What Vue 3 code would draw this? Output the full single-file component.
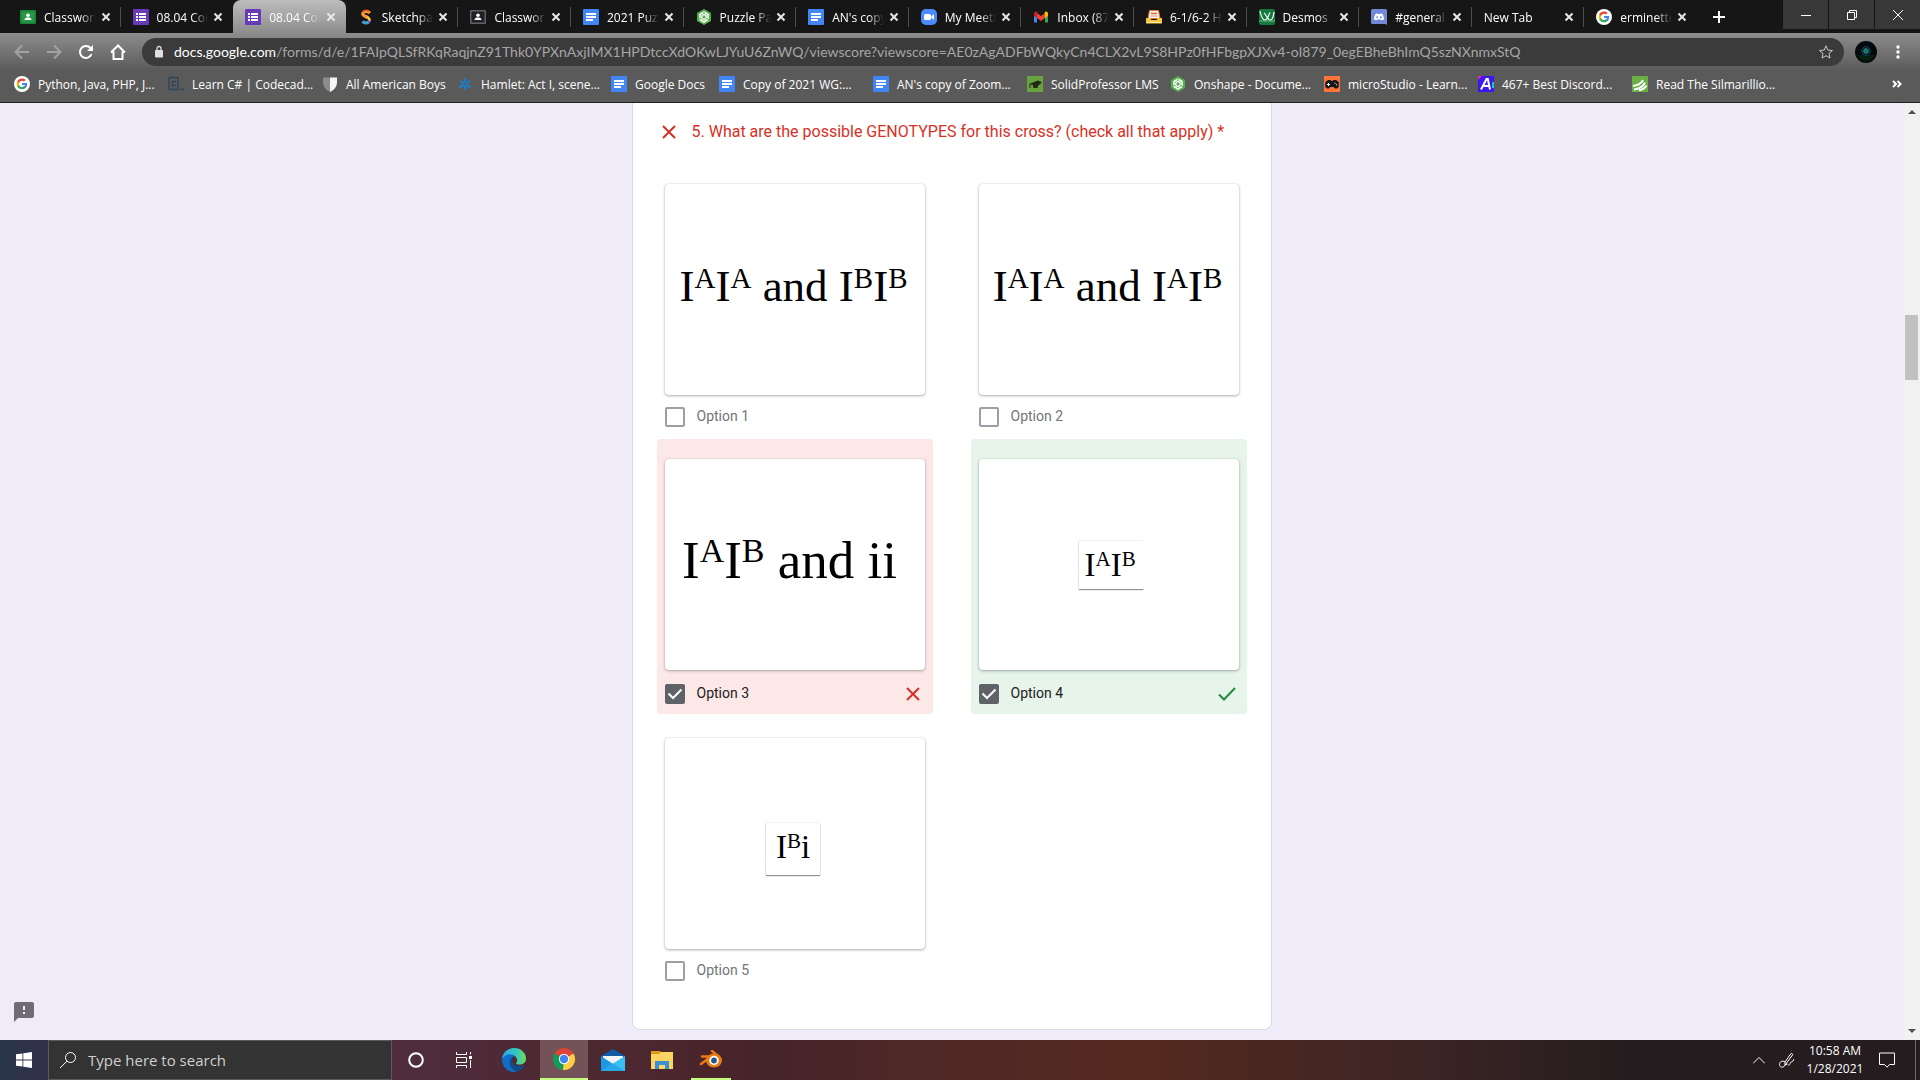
<script setup>
const G = '<path fill="#4285f4" d="M13.1 8.1c0-.4 0-.7-.1-1.100H8v2h2.900c-.1.7-.5 1.200-1.100 1.600v1.400h1.800c1-.9 1.500-2.300 1.500-3.900z"/><path fill="#34a853" d="M8 13.300c1.400 0 2.600-.5 3.500-1.300l-1.700-1.400c-.5.3-1.100.5-1.800.5-1.400 0-2.500-.9-2.900-2.200H3.200v1.400C4.100 12.100 5.900 13.300 8 13.300z"/><path fill="#fbbc04" d="M5.100 8.900a3.200 3.200 0 0 1 0-2V5.500H3.200a5.400 5.400 0 0 0 0 4.800z"/><path fill="#ea4335" d="M8 4.700c.8 0 1.500.3 2 .8L11.600 4C10.600 3.100 9.400 2.600 8 2.600 5.900 2.600 4.100 3.700 3.200 5.500l1.900 1.400C5.500 5.600 6.600 4.700 8 4.700z"/>'

const icons = {
  classroom: '<rect y="1" width="16" height="14" rx="1" fill="#188038"/><rect x="1.500" y="2.500" width="13" height="11" fill="#34a853" opacity=".55"/><circle cx="8" cy="6.300" r="1.800" fill="#fff"/><path fill="#fff" d="M4.500 11c0-1.800 1.800-2.400 3.500-2.400s3.500.6 3.500 2.400z"/>',
  classroomGray: '<rect y="1" width="16" height="14" rx="1" fill="#5f6368"/><rect x="1.500" y="2.500" width="13" height="11" fill="#202124"/><circle cx="8" cy="6.300" r="1.800" fill="#fff"/><path fill="#fff" d="M4.500 11c0-1.800 1.800-2.400 3.500-2.400s3.500.6 3.500 2.400z"/>',
  forms: '<rect width="16" height="16" rx="1" fill="#673ab7"/><path fill="#fff" d="M3 4h2v2H3zm3 0h7v2H6zM3 7h2v2H3zm3 0h7v2H6zm-3 3h2v2H3zm3 0h7v2H6z"/>',
  sketch: '<path fill="none" stroke="#8a3fc0" stroke-width="3" d="M11.500 3.800C9.500 1.500 5 2.200 5 5c0 3 6.500 2.500 6.500 6 0 3.200-4.500 3.700-7 1.500"/><path fill="none" stroke="#fb9b22" stroke-width="3" d="M12 4C9.500 1.500 4.800 2 4.800 5c0 2.200 3.500 2.500 5.200 3.500"/><path fill="none" stroke="#f0d22c" stroke-width="2" d="M9 8c2 1 3 2 2.500 4"/><path fill="none" stroke="#2fa5c8" stroke-width="3" d="M10.500 13c-2 1.500-4.500 1-6-.5"/><path fill="none" stroke="#e5482d" stroke-width="1.500" d="M4.500 3C6 .8 9 .8 11 2"/>',
  docs: '<rect width="16" height="16" rx="1" fill="#4285f4"/><path fill="#fff" d="M3 4h10v2H3zm0 3h10v2H3zm0 3h7v2H3z"/>',
  onshape: '<path fill="#55b04b" d="M8 0l7 4v8l-7 4-7-4V4z"/><path fill="none" stroke="#fff" stroke-width="1.500" d="M8 3l4 2.500v5L8 13l-4-2.500v-5z"/><circle cx="8" cy="8" r="2.300" fill="#55b04b" stroke="#fff" stroke-width="1.300"/><path stroke="#55b04b" stroke-width="1" d="M8 1v3M13 11l-3-2M2 11l3-2"/>',
  zoom: '<rect width="16" height="16" rx="5" fill="#4a8cff"/><rect x="3" y="5" width="7" height="6" rx="1.500" fill="#fff"/><path fill="#fff" d="M10.500 7L13 5.300v5.400L10.500 9z"/>',
  gmail: '<path fill="#4285f4" d="M1 13.500V4l3 2.200v7.300z"/><path fill="#34a853" d="M12 13.500V6.200L15 4v9.500z"/><path fill="#ea4335" d="M4 9V4l4 3 4-3v5l-4 3z"/><path fill="#c5221f" d="M1 4.500C1 2.600 3 2 4.200 3L4 9 1 6.700z"/><path fill="#fbbc04" d="M15 4.500C15 2.600 13 2 11.800 3L12 9l3-2.300z"/>',
  inbox: '<path fill="#f5f0e6" stroke="#e07a3a" d="M3.500 1.500h9l1.500 8H2z"/><path stroke="#e8603c" stroke-width="1.500" d="M5 4.500h6"/><path stroke="#e8a08c" d="M4.500 7h7"/><path fill="#f8c63c" d="M0 9h4l1.500 2h5L12 9h4v5.500H0z"/><path fill="#fff0b0" d="M1 13h14v1H1z"/>',
  desmos: '<rect width="16" height="16" rx="2" fill="#127a3d"/><path fill="none" stroke="#fff" stroke-width="1.200" d="M1 2c1 5 3 9 5 9 2.500 0 3.500-5 5-7.500M5 4c2 1 3.500 7 6.500 7 2 0 3-4 3.500-8"/><path fill="none" stroke="#8fc5a4" stroke-width=".8" d="M0 12h16"/>',
  discord: '<rect width="16" height="15" rx="1.500" fill="#7289da"/><path fill="#7289da" d="M11 13h5v3z"/><path fill="#fff" d="M5 4.500h1.300l.4.500h2.600l.4-.5H11c1.300 1.500 2 4 2 5.800-.8.8-1.700 1-2.500 1l-.6-.9H6.100l-.6.900c-.8 0-1.700-.2-2.500-1 0-1.800.7-4.300 2-5.800z"/><circle cx="6.200" cy="8.200" r="1" fill="#7289da"/><circle cx="9.800" cy="8.200" r="1" fill="#7289da"/>',
  google: `<circle cx="8" cy="8" r="8" fill="#fff"/>${G}`,
  codecademy: '<rect x="1" y="1.500" width="9" height="12" rx="1" fill="none" stroke="#2c4453" stroke-width="1.300"/><path fill="none" stroke="#2c4453" stroke-width="1.300" d="M8 5.500H4.500v4H8M12 13.500h4"/>',
  shield: '<path fill="#8c8c8c" d="M1 1.500h7V16C3 13.500 1 10 1 6z"/><path fill="#f5f5f5" d="M15 1.500H8V16c5-2.500 7-6 7-10z"/>',
  spark: '<path fill="none" stroke="#1283da" stroke-width="1.700" stroke-linecap="round" d="M8 2.500v3.700M8 9.800v3.700M3.200 5.300l3.200 1.800M9.600 9l3.200 1.800M12.800 5.300L9.600 7.100M6.400 9l-3.200 1.800"/><circle cx="3.500" cy="11" r="1.200" fill="#1283da"/><circle cx="12.500" cy="11" r="1.200" fill="#1283da"/>',
  solid: '<rect width="16" height="16" fill="#67a23f"/><path fill="#1d2b17" d="M2 8l9-3.500 4 1.700L11 10v1.500c-2 1-4 .5-5 0V9z"/><path stroke="#1d2b17" d="M3 8v4"/>',
  micro: '<rect width="16" height="16" fill="#ff7438"/><path fill="#15191d" d="M4 4h2.500l1 1h1l1-1H12l2.700 2v5L13 12.500h-2L9.500 11h-3L5 12.500H3L1.300 11V6z"/><path stroke="#fff" d="M4.500 7v3M3 8.500h3"/><path fill="#fff" d="M10.500 6.800h1v1h-1zm1.500 1.500h1v1h-1z"/>',
  discordBest: '<rect width="16" height="16" fill="#3b17f0"/><path fill="#e72b9c" d="M0 0h4L0 4z"/><path fill="#20c5d9" d="M14 6h2v6h-2z"/><path fill="none" stroke="#fff" stroke-width="2" d="M3 13.500L8.500 3h1.300L12 13.500M5.500 10h6"/>',
  read: '<rect width="16" height="16" fill="#69b043"/><path fill="none" stroke="#fff" stroke-width="2" d="M1 10c5-.5 8-2 10-6M2 13.500c6-.5 9-3 11-7M7 14.500c4-1 6-2.500 7.500-5"/>',
}

const tabs = [
  { icon: 'classroom', title: 'Classwork' },
  { icon: 'forms', title: '08.04 Con' },
  { icon: 'forms', title: '08.04 Con', active: true },
  { icon: 'sketch', title: 'Sketchpad' },
  { icon: 'classroomGray', title: 'Classwork' },
  { icon: 'docs', title: '2021 Puzz' },
  { icon: 'onshape', title: 'Puzzle Par' },
  { icon: 'docs', title: "AN's copy" },
  { icon: 'zoom', title: 'My Meeti' },
  { icon: 'gmail', title: 'Inbox (87' },
  { icon: 'inbox', title: '6-1/6-2 H' },
  { icon: 'desmos', title: 'Desmos |' },
  { icon: 'discord', title: '#general' },
  { title: 'New Tab' },
  { icon: 'google', title: 'erminette' },
]

const bookmarks = [
  { icon: 'google', title: 'Python, Java, PHP, J...' },
  { icon: 'codecademy', title: 'Learn C# | Codecad...' },
  { icon: 'shield', title: 'All American Boys', size: 'medium' },
  { icon: 'spark', title: 'Hamlet: Act I, scene...' },
  { icon: 'docs', title: 'Google Docs', size: 'small' },
  { icon: 'docs', title: 'Copy of 2021 WG:...' },
  { icon: 'docs', title: "AN's copy of Zoom..." },
  { icon: 'solid', title: 'SolidProfessor LMS', size: 'large' },
  { icon: 'onshape', title: 'Onshape - Docume...' },
  { icon: 'micro', title: 'microStudio - Learn...' },
  { icon: 'discordBest', title: '467+ Best Discord...' },
  { icon: 'read', title: 'Read The Silmarillio...' },
]

const sup = (t) => ({ t, up: true })
const txt = (t) => ({ t })
const options = [
  { id: 1, size: 'wide', parts: [txt('I'), sup('A'), txt('I'), sup('A'), txt(' and I'), sup('B'), txt('I'), sup('B')] },
  { id: 2, size: 'wide', parts: [txt('I'), sup('A'), txt('I'), sup('A'), txt(' and I'), sup('A'), txt('I'), sup('B')] },
  { id: 3, size: 'big', state: 'wrong', parts: [txt('I'), sup('A'), txt('I'), sup('B'), txt(' and ii')] },
  { id: 4, size: 'clip', state: 'right', parts: [txt('I'), sup('A'), txt('I'), sup('B')] },
  { id: 5, size: 'tile', parts: [txt('I'), sup('B'), txt('i')] },
]
const path = '/forms/d/e/1FAIpQLSfRKqRaqjnZ91Thk0YPXnAxjIMX1HPDtccXdOKwLJYuU6ZnWQ/viewscore?viewscore=AE0zAgADFbWQkyCn4CLX2vL9S8HPz0fHFbgpXJXv4-oI879_0egEBheBhImQ5szNXnmxStQ'
</script>

<template>
  <div class="screen">
    <header class="browser">
      <div class="strip">
        <div class="tabs">
          <div v-for="(tab, i) in tabs" :key="i" class="tab" :class="{ active: tab.active, bare: i === 1 }">
            <svg v-if="tab.icon" class="fav" viewBox="0 0 16 16" v-html="icons[tab.icon]"></svg>
            <span class="title">{{ tab.title }}</span>
            <button class="close" aria-label="Close tab">
              <svg viewBox="0 0 10 10"><path d="M1.500 1.500l7 7M8.500 1.500l-7 7" /></svg>
            </button>
          </div>
        </div>
        <button class="plus" aria-label="New tab"><svg viewBox="0 0 12 12"><path d="M6 0v12M0 6h12" /></svg></button>
        <div class="controls">
          <button aria-label="Minimize"><svg viewBox="0 0 10 10"><path d="M0 5.500h10" /></svg></button>
          <button aria-label="Restore"><svg viewBox="0 0 10 10"><path d="M.5 2.500h7v7h-7zM2.500 2.500v-2h7v7h-2" /></svg></button>
          <button aria-label="Close"><svg viewBox="0 0 10 10"><path d="M0 0l10 10M10 0L0 10" /></svg></button>
        </div>
      </div>

      <div class="toolbar">
        <button class="tool dim" aria-label="Back"><svg viewBox="0 0 16 16"><path d="M15 8H2M8 1.500L1.500 8 8 14.500" /></svg></button>
        <button class="tool dim" aria-label="Forward"><svg viewBox="0 0 16 16"><path d="M1 8h13M8 1.500L14.500 8 8 14.500" /></svg></button>
        <button class="tool" aria-label="Reload"><svg viewBox="0 0 16 16"><path d="M13.500 10.200A6 6 0 1 1 12.500 4" /><path class="solid" d="M15 1v6H9z" /></svg></button>
        <button class="tool" aria-label="Home"><svg viewBox="0 0 16 16"><path d="M1 8.500L8 1.500l7 7M3.500 7.500V15h9V7.500" /></svg></button>
        <div class="address">
          <svg class="lock" viewBox="0 0 10 14"><rect x="1" y="5" width="8" height="7.500" rx="1" fill="#e0e0e0" /><path d="M3 5.500V3.500a2 2 0 0 1 4 0v2" fill="none" stroke="#e0e0e0" stroke-width="1.300" /></svg>
          <label for="url">docs.google.com</label>
          <input id="url" type="text" :value="path" />
          <button class="star" aria-label="Bookmark this tab"><svg viewBox="0 0 16 16"><path d="M8 1.800l1.800 4.300 4.700.4-3.500 3 1 4.600-4-2.400-4 2.400 1-4.600-3.500-3 4.700-.4z" /></svg></button>
        </div>
        <button class="profile" aria-label="Profile"><svg viewBox="0 0 22 22"><circle cx="11" cy="11" r="11" fill="#06090c" /><path d="M2 14a10 10 0 0 0 18 0z" fill="#062010" /><circle cx="11" cy="10" r="4.300" fill="none" stroke="#0d4d7c" /><circle cx="11" cy="10" r="2.300" fill="#126d55" stroke="#1aa68a" /></svg></button>
        <button class="more" aria-label="Menu"><svg viewBox="0 0 4 14"><circle cx="2" cy="2" r="1.700" /><circle cx="2" cy="7" r="1.700" /><circle cx="2" cy="12" r="1.700" /></svg></button>
      </div>

      <nav class="bookmarks">
        <a v-for="b in bookmarks" :key="b.title" href="#" class="bookmark" :class="b.size">
          <svg class="fav" viewBox="0 0 16 16" v-html="icons[b.icon]"></svg>
          <span>{{ b.title }}</span>
        </a>
        <button class="overflow" aria-label="More bookmarks"><svg viewBox="0 0 10 8"><path d="M1 1l3 3-3 3M5.500 1l3 3-3 3" /></svg></button>
      </nav>
    </header>

    <div class="viewport">
      <main class="page">
        <section class="card">
          <h1 class="question">
            <svg class="mark wrong" viewBox="0 0 14 14"><path d="M1 1l12 12M13 1L1 13" /></svg>
            <span>5. What are the possible GENOTYPES for this cross? (check all that apply) *</span>
          </h1>
          <div class="options">
            <div v-for="o in options" :key="o.id" class="option" :class="o.state">
              <div class="picture">
                <div class="formula" :class="o.size"><span v-for="(p, i) in o.parts" :key="i" :class="{ up: p.up }">{{ p.t }}</span></div>
              </div>
              <div class="choice">
                <input :id="'opt' + o.id" type="checkbox" :checked="!!o.state" />
                <label :for="'opt' + o.id">Option {{ o.id }}</label>
                <svg v-if="o.state === 'wrong'" class="mark wrong" viewBox="0 0 14 14"><path d="M1 1l12 12M13 1L1 13" /></svg>
                <svg v-if="o.state === 'right'" class="mark right" viewBox="0 0 18 14"><path d="M1 7.500L6 12.500 17 1" /></svg>
              </div>
            </div>
          </div>
        </section>
        <button class="feedback" aria-label="Report a problem"><svg viewBox="0 0 20 20"><path d="M18 0H2a2 2 0 0 0-2 2v18l4-4h14a2 2 0 0 0 2-2V2a2 2 0 0 0-2-2zm-7 12H9v-2h2zm0-4H9V4h2z" /></svg></button>
      </main>
      <div class="scrollbar">
        <svg viewBox="0 0 8 4"><path d="M0 4l4-4 4 4z" /></svg>
        <div class="track"><div class="thumb"></div></div>
        <svg viewBox="0 0 8 4"><path d="M0 0l4 4 4-4z" /></svg>
      </div>
    </div>

    <footer class="taskbar">
      <button class="start" aria-label="Start"><svg viewBox="0 0 16 16"><path fill="#fff" d="M0 2.300l6.500-.9v6.200H0zM7.300 1.300L16 0v7.600H7.300zM0 8.400h6.500v6.200L0 13.700zM7.300 8.400H16V16l-8.700-1.200z" /></svg></button>
      <label class="search">
        <svg viewBox="0 0 16 16"><circle cx="10.500" cy="5.500" r="5" /><path d="M7 9.200L0 16" /></svg>
        <input type="text" placeholder="Type here to search" />
      </label>
      <button class="app" aria-label="Cortana"><svg class="s16" viewBox="0 0 16 16"><circle cx="8" cy="8" r="6.800" fill="none" stroke="#fff" stroke-width="2" /></svg></button>
      <button class="app" aria-label="Task View"><svg class="s16" viewBox="0 0 16 16"><path fill="none" stroke="#fff" d="M.5 0v2.500h10V0M.5 16v-2.500h10V16M.5 5.500h10v5H.5zM14.500 0v2.500M14.500 8v8" /><path fill="#fff" d="M13 4h3v3h-3z" /></svg></button>
      <button class="app wide-app" aria-label="Edge">
        <svg class="s24" viewBox="0 0 24 24">
          <defs>
            <linearGradient id="e1" x1="0" y1="0" x2="1" y2="0"><stop offset="0" stop-color="#2aa8e8" /><stop offset=".6" stop-color="#33c7c0" /><stop offset="1" stop-color="#6fe052" /></linearGradient>
          </defs>
          <path fill="#0f6fc8" d="M0 11C2 5 9 4 12.500 8c-3 1-4 5-1.500 8 3 3 8 3 11 1-2 5-7 7-11 7C5 23.500 0 18 0 11z" />
          <path fill="#114a8b" d="M9 10c-3 4-1 11 5 13.500 4-.5 7-3 8-6.500-3 2-8 2-11-1-2-2.500-2-4.500-.5-6z" />
          <path fill="url(#e1)" d="M0 11C.5 4.500 6 0 12 0c7 0 12 5 12 10.500 0 4-3 6-6.500 6-3 0-4-1-3-2.200C17 11 12 4.500 6 6.500 3 7.500 1 9 0 11z" />
        </svg>
      </button>
      <button class="app current" aria-label="Chrome">
        <svg class="s24" viewBox="0 0 24 24"><path fill="#db4437" d="M12 12L2.500 6.500a11 11 0 0 1 19 0z" /><path fill="#0f9d58" d="M12 12l-1 11A11 11 0 0 1 2.500 6.500z" /><path fill="#ffcd40" d="M12 12l9.500-5.500A11 11 0 0 1 11 23z" /><circle cx="12" cy="12" r="5.200" fill="#fff" /><circle cx="12" cy="12" r="4.200" fill="#4285f4" /></svg>
      </button>
      <button class="app" aria-label="Mail"><svg class="s24" viewBox="0 0 24 24"><path fill="#0f5ba7" d="M0 8l12-7 12 7v4H0z" /><path fill="#f3f3f3" d="M2 8h20v9H2z" /><path fill="#1b97e4" d="M0 8l12 8-8 7H0z" /><path fill="#37c0f2" d="M24 8L0 23h24z" /><path fill="#2aa7e8" d="M12 15.500L24 23H0z" /></svg></button>
      <button class="app" aria-label="File Explorer"><svg class="s24" viewBox="0 0 24 24"><path fill="#dc9a1c" d="M1 3h9l2 2h11v4H1z" /><path fill="#fcd462" d="M1 6h8l2-2h12v17H1z" /><path fill="#3a8fd6" d="M5 13h14v8h-4v-4H9v4H5z" /></svg></button>
      <button class="app running" aria-label="Blender"><svg class="s24" viewBox="0 0 24 24"><path fill="none" stroke="#ea7a14" stroke-width="2.500" stroke-linecap="round" d="M3 9.500h10M13 4l6 5M2 17l8-6" /><ellipse cx="15" cy="13.500" rx="8" ry="7" fill="#ea7a14" /><circle cx="15" cy="13.500" r="4.700" fill="#fff" /><circle cx="15" cy="13.500" r="2.900" fill="#265787" /></svg></button>
      <div class="tray">
        <button aria-label="Show hidden icons"><svg class="chev" viewBox="0 0 12 7"><path d="M0 6.500l6-6 6 6" /></svg></button>
        <button aria-label="Windows Ink"><svg class="s16" viewBox="0 0 16 16"><path d="M6 10C3 8 .5 10 .5 12.500S3 16 5 14.500L13.500 3c.5-1-.8-2-1.700-1.200L6 10v3l2.500-1M9 13c2 1 2-3 4-3.500s2-2.500 1-2.500" /></svg></button>
        <div class="clock"><span>10:58 AM</span><span>1/28/2021</span></div>
        <button aria-label="Notifications"><svg class="s16" viewBox="0 0 16 16"><path d="M.5 1h15v11.500h-5L8 15.200l-2.500-2.700h-5z" /></svg></button>
      </div>
    </footer>
  </div>
</template>

<style>
body { margin: 0; }
</style>

<style scoped>
* { box-sizing: border-box; }
button { border: 0; padding: 0; background: none; display: flex; align-items: center; justify-content: center; flex: none; }
svg { display: block; flex: none; }
input { font: inherit; border: 0; outline: 0; background: none; padding: 0; }
.screen { display: flex; flex-direction: column; height: 100vh; overflow: hidden; font-family: "Open Sans", sans-serif; }

.browser { background: #5a5a5a; border-bottom: 1px solid #202020; flex: none; color: #fff; }
.strip { display: flex; height: 33px; background: #161616; }
.tabs { display: flex; flex: 1; padding-left: 8px; min-width: 0; }
.tab { flex: 1 1 0; min-width: 0; display: flex; align-items: center; padding: 1px 10px 0 12px; position: relative; font-size: 12px; }
.tab::after { content: ""; position: absolute; right: 0; top: 7px; width: 1px; height: 20px; background: #4e4e4e; }
.tab.active { background: linear-gradient(#bdbdbd, #8d8d8d); border-radius: 8px 8px 0 0; }
.tab.active::after, .tab.bare::after, .tab:last-child::after { display: none; }
.fav { width: 16px; height: 16px; margin-right: 8px; }
.title { flex: 1; min-width: 0; overflow: hidden; white-space: nowrap; mask-image: linear-gradient(90deg, #000 calc(100% - 16px), transparent); }
.close { width: 10px; height: 10px; margin-left: 5px; }
.close svg { width: 10px; height: 10px; fill: none; stroke: #e8e8e8; stroke-width: 2; }
.plus { width: 28px; margin: 0 50px 0 8px; }
.plus svg { width: 12px; height: 12px; stroke: #fff; stroke-width: 2; }
.controls { display: flex; gap: 1px; height: 29px; }
.controls button { width: 45px; background: #383838; }
.controls svg { width: 10px; height: 10px; fill: none; stroke: #fff; stroke-width: 1; overflow: visible; }

.toolbar { display: flex; align-items: center; height: 38px; padding: 0 14px; background: linear-gradient(#8d8d8d, #5a5a5a); }
.tool { width: 16px; margin-right: 16px; }
.tool svg { width: 16px; height: 16px; fill: none; stroke: #fff; stroke-width: 2; }
.tool.dim svg { stroke: #a2a2a2; }
.tool .solid { fill: #fff; stroke: none; }
.address { display: flex; align-items: center; flex: 1; min-width: 0; height: 28px; margin-right: 11px; padding: 0 10px 0 12px; border-radius: 14px; background: #3b3b3b; font: 14px/20px Lato, sans-serif; color: #fff; }
.lock { width: 10px; height: 14px; margin-right: 10px; }
.address input { flex: 1; min-width: 0; color: #a6a6a6; }
.star svg { width: 16px; height: 16px; fill: none; stroke: #c8c8c8; stroke-width: 1; }
.profile svg { width: 22px; height: 22px; }
.more { width: 4px; margin: 0 6px 0 19px; }
.more svg { width: 4px; height: 14px; fill: #fff; }

.bookmarks { display: flex; align-items: center; height: 31px; padding: 0 18px 5px 14px; font-size: 12px; }
.bookmark { display: flex; align-items: center; width: 154px; flex: none; color: #fff; text-decoration: none; white-space: nowrap; }
.bookmark.small { width: 108px; }
.bookmark.medium { width: 135px; }
.bookmark.large { width: 143px; }
.overflow { margin-left: auto; }
.overflow svg { width: 10px; height: 8px; fill: none; stroke: #fff; stroke-width: 2; }

.viewport { flex: 1; min-height: 0; display: flex; background: #f0ebf8; }
.page { flex: 1; min-width: 0; position: relative; }
.card { width: 640px; max-width: 100%; margin: 0 auto; padding: 19px 24px 47px; background: #fff; border: 1px solid #dadce0; border-top: 0; border-radius: 0 0 8px 8px; }
.question { display: flex; align-items: center; gap: 16px; margin: 0 0 22px 5px; height: 20px; font: 400 16px/20px Roboto, sans-serif; color: #d93025; white-space: nowrap; }
.mark { fill: none; stroke-width: 2; }
.mark.wrong { width: 14px; height: 14px; stroke: #d93025; }
.mark.right { width: 18px; height: 14px; stroke: #1e8e3e; }
.options { display: grid; grid-template-columns: 276px 276px; column-gap: 38px; }
.option { padding: 20px 8px 0; height: 275px; border-radius: 4px; }
.option:last-child { margin-top: 4px; height: 264px; }
.option.wrong { background: #fce8e6; }
.option.right { background: #e6f4ea; }
.picture { display: flex; align-items: center; justify-content: center; height: 211px; background: #fff; border-radius: 4px; box-shadow: 0 1px 3px rgba(60, 64, 67, .4), 0 0 1px rgba(60, 64, 67, .3); }
.formula { font-family: "Liberation Serif", serif; color: #000; white-space: pre; }
.formula.wide { font-size: 45px; padding: 0 2px 8px 0; }
.formula.wide .up { font-size: 29px; top: -13px; }
.formula.big { font-size: 53px; padding: 0 10px 10px 0; }
.formula.big .up { font-size: 34px; top: -16px; }
.formula.clip, .formula.tile { font-size: 33px; line-height: 48px; box-shadow: 0 1px 1px rgba(0, 0, 0, .4), 0 0 1px rgba(0, 0, 0, .3); }
.formula.clip { width: 65px; padding-left: 6px; margin-left: 5px; clip-path: inset(-2px 0 -3px -2px); }
.formula.tile { padding: 0 10px 4px; margin: 10px 3px 0 0; }
.formula.clip .up, .formula.tile .up { font-size: 21px; top: -10px; }
.up { position: relative; line-height: 1px; }
.choice { display: flex; align-items: center; height: 20px; margin-top: 12px; font: 14px/20px Roboto, sans-serif; color: #70757a; }
.wrong .choice, .right .choice { margin-top: 14px; padding-right: 5px; color: #202124; }
.right .choice { padding-right: 3px; }
.choice label { margin-left: 12px; padding-bottom: 2px; flex: 1; }
.choice input { appearance: none; width: 20px; height: 20px; margin: 0; border: 2px solid #9aa0a6; border-radius: 2px; }
.choice input:checked { border-color: #5f6368; background: #5f6368 url("data:image/svg+xml,%3Csvg xmlns='http://www.w3.org/2000/svg' viewBox='0 0 16 16'%3E%3Cpath d='M1.500 7.500L6 12 14.500 3.500' fill='none' stroke='white' stroke-width='2'/%3E%3C/svg%3E") center / 16px 16px no-repeat; }
.feedback { position: absolute; left: 14px; bottom: 18px; }
.feedback svg { width: 20px; height: 20px; fill: #706c74; }

.scrollbar { width: 17px; flex: none; display: flex; flex-direction: column; align-items: center; padding: 7px 0; background: #f1f1f1; }
.scrollbar svg { width: 8px; height: 4px; fill: #505050; }
.track { flex: 1; width: 13px; padding-top: 201px; }
.thumb { height: 65px; background: #c1c1c1; }

.taskbar { display: flex; flex: none; height: 40px; background: linear-gradient(90deg, #283448 0, #35304a 3%, #4f2d3c 20%, #4b262d 35%, #452428 40%, #502827 48%, #54291f 60%, #3a2424 75%, #241c1e 85%, #241c1f 100%); }
.start { width: 48px; }
.start svg { width: 16px; height: 16px; }
.search { display: flex; align-items: center; width: 344px; padding-left: 11px; gap: 12px; background: #333; border: 1px solid #5b5b5b; font-size: 15px; }
.search svg { width: 16px; height: 16px; fill: none; stroke: #fff; stroke-width: 1; overflow: visible; }
.search input { flex: 1; min-width: 0; color: #fff; }
.search input::placeholder { color: #d0d0d0; opacity: 1; }
.app { width: 48px; }
.app.wide-app { width: 52px; }
.app.current { background: #745358; border-bottom: 2px solid #c6ff7a; }
.app.current + .app { width: 50px; }
.app.running { width: 40px; margin-left: 5px; border-bottom: 2px solid #c6ff7a; }
.s16 { width: 16px; height: 16px; }
.s24 { width: 24px; height: 24px; }
.tray { display: flex; align-items: center; margin-left: auto; padding-right: 20px; gap: 14px; border-right: 1px solid #6a6a6a; margin-right: 4px; }
.tray svg { fill: none; stroke: #fff; stroke-width: 1; }
.chev { width: 12px; height: 7px; }
.clock { display: flex; flex-direction: column; align-items: center; width: 52px; margin-right: 4px; font-size: 12px; line-height: 18px; color: #fff; white-space: nowrap; }
</style>
